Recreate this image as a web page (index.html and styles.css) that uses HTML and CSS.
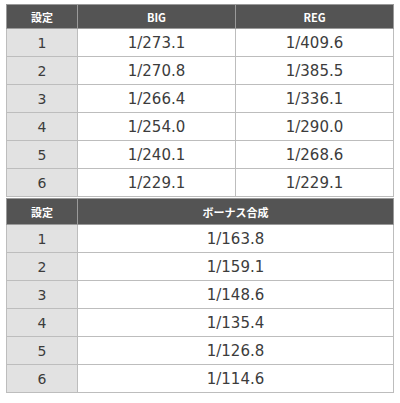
FILE: index.html
```html
<!DOCTYPE html>
<html lang="ja">
<head>
<meta charset="utf-8">
<link rel="stylesheet" href="styles.css">
</head>
<body>
<div class="wrap">
<table class="tbl">
<colgroup><col class="c-set"><col class="c-val"><col class="c-val"></colgroup>
<thead><tr><th>設定</th><th>BIG</th><th>REG</th></tr></thead>
<tbody>
<tr><td class="set">1</td><td>1/273.1</td><td>1/409.6</td></tr>
<tr><td class="set">2</td><td>1/270.8</td><td>1/385.5</td></tr>
<tr><td class="set">3</td><td>1/266.4</td><td>1/336.1</td></tr>
<tr><td class="set">4</td><td>1/254.0</td><td>1/290.0</td></tr>
<tr><td class="set">5</td><td>1/240.1</td><td>1/268.6</td></tr>
<tr><td class="set">6</td><td>1/229.1</td><td>1/229.1</td></tr>
</tbody>
</table>
<table class="tbl second">
<colgroup><col class="c-set"><col></colgroup>
<thead><tr><th>設定</th><th>ボーナス合成</th></tr></thead>
<tbody>
<tr><td class="set">1</td><td>1/163.8</td></tr>
<tr><td class="set">2</td><td>1/159.1</td></tr>
<tr><td class="set">3</td><td>1/148.6</td></tr>
<tr><td class="set">4</td><td>1/135.4</td></tr>
<tr><td class="set">5</td><td>1/126.8</td></tr>
<tr><td class="set">6</td><td>1/114.6</td></tr>
</tbody>
</table>
</div>
</body>
</html>
```
FILE: styles.css
```css
html, body {
  margin: 0;
  padding: 0;
  background: #ffffff;
}
.wrap {
  padding: 4px 0 0 6px;
  width: 388px;
}
.tbl {
  width: 388px;
  border-collapse: collapse;
  table-layout: fixed;
  font-family: "DejaVu Sans", "Noto Sans CJK JP", sans-serif;
}
.second {
  margin-top: 1px;
}
.c-set { width: 71px; }
.tbl th {
  background: #545454;
  color: #ffffff;
  font-family: "Noto Sans CJK JP", sans-serif;
  font-weight: bold;
  font-size: 11px;
  height: 23px;
  padding: 0;
  border: 1px solid #9a9a9a;
  text-align: center;
  vertical-align: middle;
}
.second th { height: 25px; }
.tbl td {
  height: 27px;
  padding: 0;
  border: 1px solid #bdbdbd;
  text-align: center;
  vertical-align: middle;
  color: #3c3c3c;
  font-size: 15px;
  background: #ffffff;
}
.tbl td.set {
  background: #e2e2e2;
  font-size: 14px;
}
```
